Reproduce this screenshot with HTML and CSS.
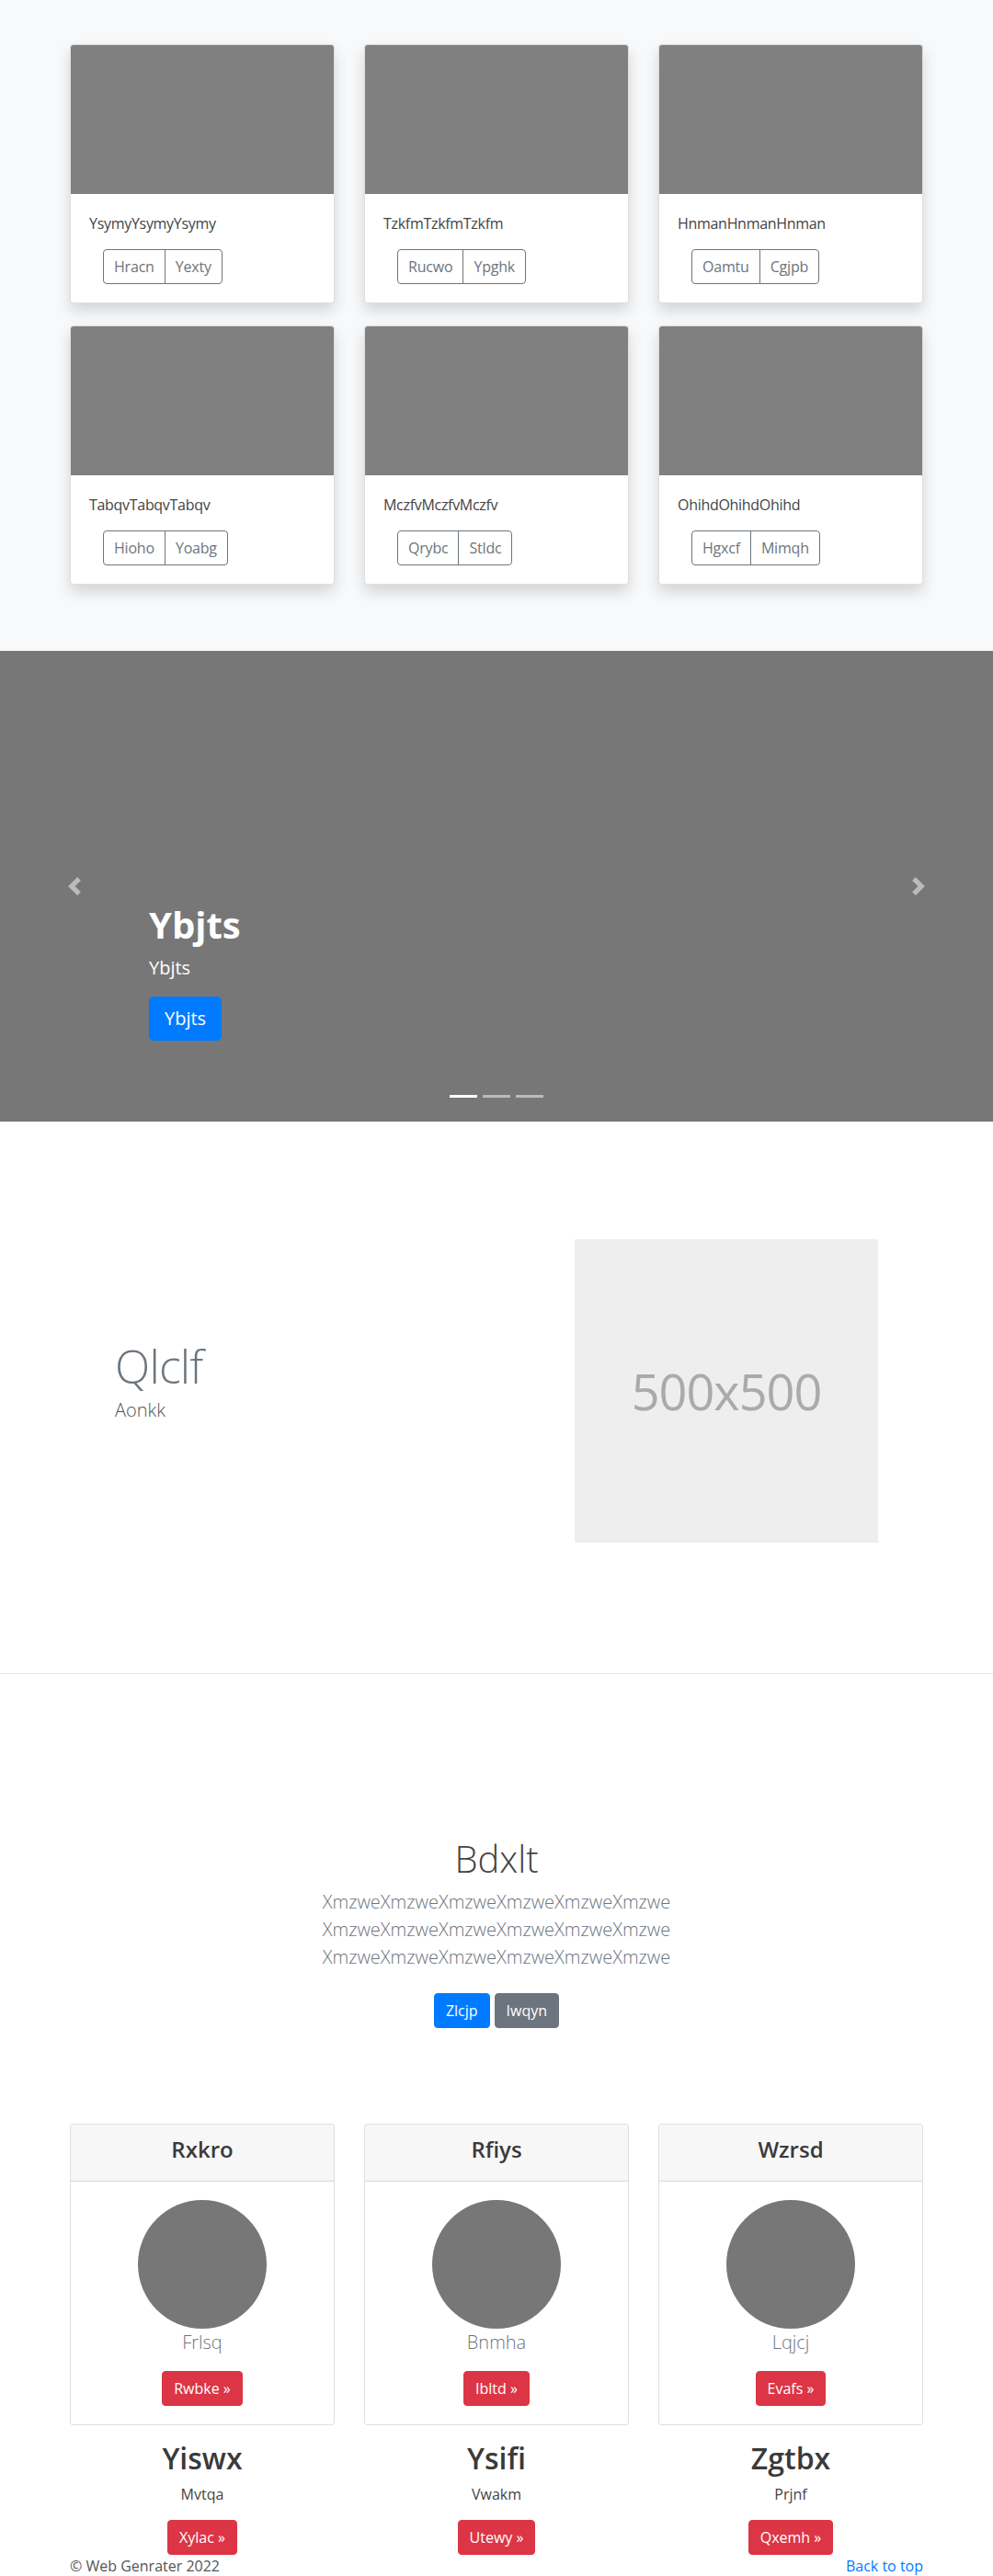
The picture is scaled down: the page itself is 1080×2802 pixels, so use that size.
FILE: index.html
```html
<!DOCTYPE html>
<html lang="en">
<head>
<meta charset="utf-8">
<title>Web Genrater</title>
<link rel="stylesheet" href="styles.css">
</head>
<body>
<main>
  <section class="album">
    <div class="container album-grid">
      <div class="card shadow">
        <div class="card-img"></div>
        <div class="card-body">
          <p class="card-text">YsymyYsymyYsymy</p>
          <div class="btn-group"><a class="btn btn-outline">Hracn</a><a class="btn btn-outline">Yexty</a></div>
        </div>
      </div>
      <div class="card shadow">
        <div class="card-img"></div>
        <div class="card-body">
          <p class="card-text">TzkfmTzkfmTzkfm</p>
          <div class="btn-group"><a class="btn btn-outline">Rucwo</a><a class="btn btn-outline">Ypghk</a></div>
        </div>
      </div>
      <div class="card shadow">
        <div class="card-img"></div>
        <div class="card-body">
          <p class="card-text">HnmanHnmanHnman</p>
          <div class="btn-group"><a class="btn btn-outline">Oamtu</a><a class="btn btn-outline">Cgjpb</a></div>
        </div>
      </div>
      <div class="card shadow">
        <div class="card-img"></div>
        <div class="card-body">
          <p class="card-text">TabqvTabqvTabqv</p>
          <div class="btn-group"><a class="btn btn-outline">Hioho</a><a class="btn btn-outline">Yoabg</a></div>
        </div>
      </div>
      <div class="card shadow">
        <div class="card-img"></div>
        <div class="card-body">
          <p class="card-text">MczfvMczfvMczfv</p>
          <div class="btn-group"><a class="btn btn-outline">Qrybc</a><a class="btn btn-outline">Stldc</a></div>
        </div>
      </div>
      <div class="card shadow">
        <div class="card-img"></div>
        <div class="card-body">
          <p class="card-text">OhihdOhihdOhihd</p>
          <div class="btn-group"><a class="btn btn-outline">Hgxcf</a><a class="btn btn-outline">Mimqh</a></div>
        </div>
      </div>
    </div>
  </section>

  <section class="carousel">
    <div class="caption">
      <h1 class="caption-title">Ybjts</h1>
      <p class="caption-text">Ybjts</p>
      <p class="caption-action"><a class="btn btn-lg btn-primary">Ybjts</a></p>
    </div>
    <a class="ctrl ctrl-prev" aria-label="Previous">
      <svg viewBox="0 0 8 8" width="20" height="20"><path d="M5.25 0l-4 4 4 4 1.5-1.5L4.25 4l2.5-2.5L5.25 0z"/></svg>
    </a>
    <a class="ctrl ctrl-next" aria-label="Next">
      <svg viewBox="0 0 8 8" width="20" height="20"><path d="M2.75 0l-1.5 1.5L3.75 4l-2.5 2.5L2.75 8l4-4-4-4z"/></svg>
    </a>
    <div class="indicators">
      <span class="ind active"></span><span class="ind"></span><span class="ind"></span>
    </div>
  </section>

  <section class="featurette">
    <div class="feat-inner">
      <div class="feat-text">
        <h2 class="feat-heading">Qlclf</h2>
        <p class="feat-lead">Aonkk</p>
      </div>
      <div class="placeholder"><span>500x500</span></div>
    </div>
  </section>
  <hr class="divider">

  <section class="jumbo">
    <h1 class="jumbo-heading">Bdxlt</h1>
    <p class="jumbo-lead">XmzweXmzweXmzweXmzweXmzweXmzwe<br>XmzweXmzweXmzweXmzweXmzweXmzwe<br>XmzweXmzweXmzweXmzweXmzweXmzwe</p>
    <div class="jumbo-actions"><a class="btn btn-primary">Zlcjp</a><a class="btn btn-secondary">Iwqyn</a></div>
  </section>

  <section class="pricing">
    <div class="container pricing-grid">
      <div class="col">
        <div class="card">
          <div class="card-header"><h4 class="header-title">Rxkro</h4></div>
          <div class="card-body center">
            <div class="circle"></div>
            <p class="muted-lead">Frlsq</p>
            <a class="btn btn-danger">Rwbke &raquo;</a>
          </div>
        </div>
        <h2 class="col-title">Yiswx</h2>
        <p class="col-text">Mvtqa</p>
        <p class="col-action"><a class="btn btn-danger">Xylac &raquo;</a></p>
      </div>
      <div class="col">
        <div class="card">
          <div class="card-header"><h4 class="header-title">Rfiys</h4></div>
          <div class="card-body center">
            <div class="circle"></div>
            <p class="muted-lead">Bnmha</p>
            <a class="btn btn-danger">Ibltd &raquo;</a>
          </div>
        </div>
        <h2 class="col-title">Ysifi</h2>
        <p class="col-text">Vwakm</p>
        <p class="col-action"><a class="btn btn-danger">Utewy &raquo;</a></p>
      </div>
      <div class="col">
        <div class="card">
          <div class="card-header"><h4 class="header-title">Wzrsd</h4></div>
          <div class="card-body center">
            <div class="circle"></div>
            <p class="muted-lead">Lqjcj</p>
            <a class="btn btn-danger">Evafs &raquo;</a>
          </div>
        </div>
        <h2 class="col-title">Zgtbx</h2>
        <p class="col-text">Prjnf</p>
        <p class="col-action"><a class="btn btn-danger">Qxemh &raquo;</a></p>
      </div>
    </div>
  </section>

  <footer class="footer">
    <div class="container footer-row">
      <p class="footer-copy">&copy; Web Genrater 2022</p>
      <p class="footer-top"><a class="link" href="#">Back to top</a></p>
    </div>
  </footer>
</main>
</body>
</html>
```

FILE: styles.css
```css
* { box-sizing: border-box; }

html, body {
  margin: 0;
  padding: 0;
}

body {
  font-family: "Open Sans", "Noto Sans", "Liberation Sans", sans-serif;
  font-size: 16px;
  line-height: 24px;
  color: #212529;
  background: #fff;
}

p { margin: 0; }
h1, h2, h4 { margin: 0; }

.container {
  width: 928px;
  margin: 0 auto;
}

/* ---------- buttons ---------- */
.btn {
  display: inline-block;
  padding: 6px 12px;
  font-size: 16px;
  line-height: 24px;
  border: 1px solid transparent;
  border-radius: 4px;
  text-decoration: none;
  cursor: pointer;
  white-space: nowrap;
}
.btn-outline {
  color: #6c757d;
  border-color: #6c757d;
  background: transparent;
  padding: 6px 11px;
  letter-spacing: -0.2px;
}
.btn-primary { background: #007bff; border-color: #007bff; color: #fff; }
.btn-secondary { background: #6c757d; border-color: #6c757d; color: #fff; }
.btn-danger { background: #dc3545; border-color: #dc3545; color: #fff; }
.btn-lg {
  padding: 8px 16px;
  font-size: 20px;
  line-height: 30px;
  border-radius: 5px;
}

.btn-group {
  display: inline-flex;
  margin-left: 15px;
}
.btn-group .btn:first-child { border-radius: 4px 0 0 4px; }
.btn-group .btn:last-child { border-radius: 0 4px 4px 0; margin-left: -1px; }

/* ---------- album ---------- */
.album {
  background: #f8f9fa;
  padding: 48px 0;
}
.album-grid {
  display: grid;
  grid-template-columns: repeat(3, 288px);
  column-gap: 32px;
}
.card {
  background: #fff;
  border: 1px solid rgba(0, 0, 0, 0.125);
  border-radius: 4px;
  overflow: hidden;
}
.shadow {
  box-shadow: 0 8px 16px rgba(0, 0, 0, 0.15);
  margin-bottom: 24px;
}
.card-img {
  height: 162px;
  background: #808080;
}
.card-body {
  padding: 20px;
}
.card-text {
  margin-bottom: 16px;
  color: #444;
  letter-spacing: -0.3px;
}

/* ---------- carousel ---------- */
.carousel {
  position: relative;
  height: 512px;
  background: #777;
  color: #fff;
}
.caption {
  position: absolute;
  left: 162px;
  right: 162px;
  bottom: 52px;
  padding: 20px 0;
}
.caption-title {
  font-size: 40px;
  line-height: 48px;
  font-weight: 700;
  margin-bottom: 8px;
}
.caption-text {
  font-size: 20px;
  line-height: 30px;
  margin-bottom: 16px;
}
.caption-action { margin-bottom: 16px; }

.ctrl {
  position: absolute;
  top: 0;
  bottom: 0;
  width: 162px;
  display: flex;
  align-items: center;
  justify-content: center;
}
.ctrl svg { fill: #fff; opacity: 0.5; display: block; }
.ctrl-prev { left: 0; }
.ctrl-next { right: 0; }

.indicators {
  position: absolute;
  left: 0;
  right: 0;
  bottom: 26px;
  display: flex;
  justify-content: center;
  gap: 6px;
}
.ind {
  width: 30px;
  height: 3px;
  background: rgba(255, 255, 255, 0.5);
}
.ind.active { background: #fff; }

/* ---------- featurette ---------- */
.featurette {
  padding: 128px 0 142px;
}
.feat-inner {
  width: 830px;
  margin: 0 auto;
  display: flex;
  justify-content: space-between;
  align-items: center;
}
.feat-heading {
  font-size: 50px;
  line-height: 50px;
  font-weight: 300;
  letter-spacing: -0.8px;
  color: #6c757d;
  margin-bottom: 8px;
}
.feat-lead {
  font-size: 20px;
  line-height: 30px;
  font-weight: 300;
  color: #555;
  margin-bottom: 16px;
}
.placeholder {
  width: 330px;
  height: 330px;
  background: #eee;
  display: flex;
  align-items: center;
  justify-content: center;
  color: #aaa;
  font-size: 54px;
  letter-spacing: -1px;
  line-height: 1;
}
.divider {
  margin: 0;
  border: 0;
  border-top: 1px solid rgba(0, 0, 0, 0.1);
}

/* ---------- jumbo ---------- */
.jumbo {
  text-align: center;
  padding: 177px 0 96px;
}
.jumbo-heading {
  font-size: 40px;
  line-height: 48px;
  font-weight: 300;
  color: #444;
  margin-bottom: 8px;
}
.jumbo-lead {
  font-size: 20px;
  line-height: 30px;
  font-weight: 300;
  color: #6c757d;
  margin-bottom: 16px;
}
.jumbo-actions {
  display: flex;
  justify-content: center;
  gap: 5px;
  padding: 8px 0;
}

/* ---------- pricing ---------- */
.pricing-grid {
  display: grid;
  grid-template-columns: repeat(3, 288px);
  column-gap: 32px;
}
.col { text-align: center; }
.card-header {
  background: #f7f7f7;
  padding: 12px 20px;
  border-bottom: 1px solid rgba(0, 0, 0, 0.125);
}
.header-title {
  font-size: 24px;
  line-height: 29px;
  font-weight: 600;
  color: #3a3a3a;
  margin-bottom: 8px;
}
.center { text-align: center; }
.circle {
  width: 140px;
  height: 140px;
  border-radius: 50%;
  background: #777;
  margin: 0 auto;
}
.muted-lead {
  font-size: 20px;
  line-height: 30px;
  font-weight: 300;
  color: #6c757d;
  margin-bottom: 16px;
}
.pricing .card { margin-bottom: 17px; }
.col-title {
  font-size: 32px;
  line-height: 38px;
  font-weight: 600;
  color: #3a3a3a;
  margin-bottom: 8px;
}
.col-text { margin-bottom: 16px; color: #444; }

/* ---------- footer ---------- */
.footer { color: #555; }
.footer-row {
  display: flex;
  justify-content: space-between;
}
.link { color: #007bff; text-decoration: none; }
```
